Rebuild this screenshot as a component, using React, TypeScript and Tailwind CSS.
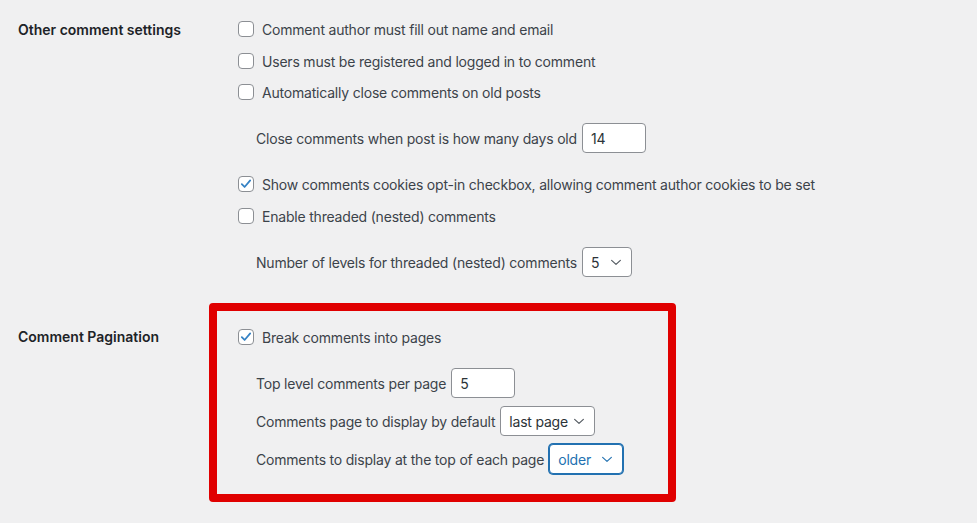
import React from 'react';

const Checkbox = ({ checked = false }: { checked?: boolean }) => (
  <span className="flex h-4 w-4 shrink-0 items-center justify-center rounded-[4px] border border-[#8c8f94] bg-white">
    {checked && (
      <svg viewBox="0 0 16 16" className="h-[14px] w-[14px]">
        <path d="M3.2 8.2 L6.4 11.4 L12.8 3.8" fill="none" stroke="#3582c4" strokeWidth="2" strokeLinecap="round" strokeLinejoin="round" />
      </svg>
    )}
  </span>
);

const CheckRow = ({ label, checked, className = '' }: { label: string; checked?: boolean; className?: string }) => (
  <div className={`flex h-6 items-center gap-2 ${className}`}>
    <Checkbox checked={checked} />
    <span>{label}</span>
  </div>
);

const Chevron = ({ color = '#50575e' }: { color?: string }) => (
  <svg viewBox="0 0 12 8" className="h-[7px] w-[12px]">
    <path d="M1 1.5 L6 6.2 L11 1.5" fill="none" stroke={color} strokeWidth="1.3" strokeLinecap="round" strokeLinejoin="round" />
  </svg>
);

const TextBox = ({ value, width }: { value: string; width: string }) => (
  <span className={`ml-[5px] flex h-[30px] items-center rounded-[4px] border border-[#8c8f94] bg-white px-2 text-[#2c3338] ${width}`}>
    {value}
  </span>
);

const SelectBox = ({ value, width, focused = false }: { value: string; width: string; focused?: boolean }) => (
  <span
    className={`ml-[5px] flex h-[30px] items-center justify-between rounded-[4px] border bg-white pl-2 pr-[9px] ${width} ${
      focused ? 'border-[#2271b1] text-[#2271b1] shadow-[0_0_0_1px_#2271b1]' : 'border-[#8c8f94] text-[#2c3338]'
    }`}
  >
    <span>{value}</span>
    <Chevron color={focused ? '#2271b1' : '#50575e'} />
  </span>
);

export default function App() {
  return (
    <div
      className="min-h-[523px] w-[977px] bg-[#f0f0f1] text-[14px] tracking-[-0.2px] text-[#3c434a]"
      style={{ fontFamily: 'Inter, "Liberation Sans", sans-serif' }}
    >
      {/* Other comment settings */}
      <div className="flex pt-[17px]">
        <div className="w-[209px] shrink-0 pl-[18px]">
          <div className="flex h-6 items-center font-semibold tracking-normal text-[#1d2327]">Other comment settings</div>
        </div>
        <div className="pl-[29px]">
          <CheckRow label="Comment author must fill out name and email" />
          <CheckRow label="Users must be registered and logged in to comment" className="mt-[8px]" />
          <CheckRow label="Automatically close comments on old posts" className="mt-[7px]" />
          <div className="mt-[19px] flex h-[30px] items-center pl-[18px]">
            <span>Close comments when post is how many days old</span>
            <TextBox value="14" width="w-[64px]" />
          </div>
          <CheckRow label="Show comments cookies opt-in checkbox, allowing comment author cookies to be set" checked className="mt-[19px]" />
          <CheckRow label="Enable threaded (nested) comments" className="mt-[8px]" />
          <div className="mt-[19px] flex h-[30px] items-center pl-[18px]">
            <span>Number of levels for threaded (nested) comments</span>
            <SelectBox value="5" width="w-[50px]" />
          </div>
        </div>
      </div>

      {/* Comment Pagination */}
      <div className="mt-[26px] flex">
        <div className="w-[209px] shrink-0 pl-[18px] pt-[21px]">
          <div className="flex h-6 items-center font-semibold tracking-normal text-[#1d2327]">Comment Pagination</div>
        </div>
        <div className="w-[467px] rounded-[4px] border-[8px] border-[#e00000] pb-[20px] pl-[21px] pt-[14px]">
          <CheckRow label="Break comments into pages" checked />
          <div className="mt-[19px] flex h-[30px] items-center pl-[18px]">
            <span>Top level comments per page</span>
            <TextBox value="5" width="w-[64px]" />
          </div>
          <div className="mt-[8px] flex h-[30px] items-center pl-[18px]">
            <span>Comments page to display by default</span>
            <SelectBox value="last page" width="w-[95px]" />
          </div>
          <div className="mt-[8px] flex h-[30px] items-center pl-[18px]">
            <span>Comments to display at the top of each page</span>
            <SelectBox value="older" width="w-[74px]" focused />
          </div>
        </div>
      </div>
    </div>
  );
}
